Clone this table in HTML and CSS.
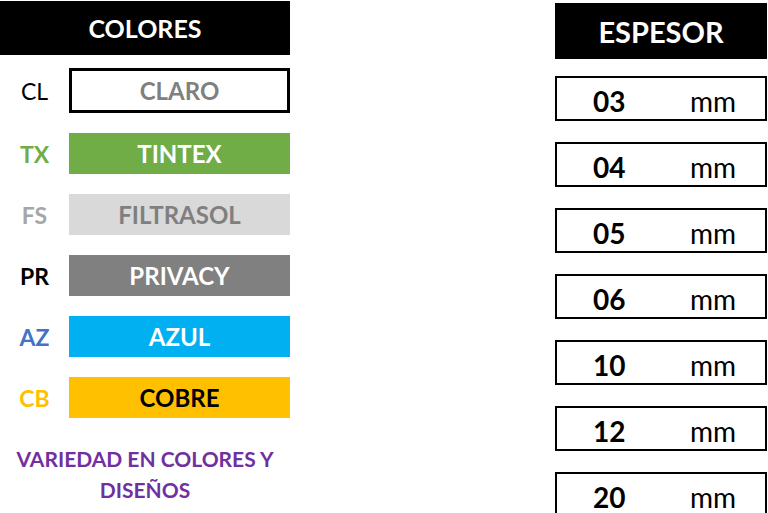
FILE: index.html
```html
<!DOCTYPE html>
<html lang="es">
<head>
<meta charset="utf-8">
<title>Colores y espesor</title>
<link rel="stylesheet" href="styles.css">
</head>
<body>
<main class="page">
  <section class="colors">
    <div class="header header-colors">COLORES</div>
    <div class="row row-first">
      <span class="code code-cl">CL</span>
      <span class="swatch sw-claro">CLARO</span>
    </div>
    <div class="row">
      <span class="code code-tx">TX</span>
      <span class="swatch sw-tintex">TINTEX</span>
    </div>
    <div class="row">
      <span class="code code-fs">FS</span>
      <span class="swatch sw-filtrasol">FILTRASOL</span>
    </div>
    <div class="row">
      <span class="code code-pr">PR</span>
      <span class="swatch sw-privacy">PRIVACY</span>
    </div>
    <div class="row">
      <span class="code code-az">AZ</span>
      <span class="swatch sw-azul">AZUL</span>
    </div>
    <div class="row">
      <span class="code code-cb">CB</span>
      <span class="swatch sw-cobre">COBRE</span>
    </div>
    <p class="note">VARIEDAD EN COLORES Y<br>DISEÑOS</p>
  </section>
  <section class="thickness">
    <div class="header header-thick">ESPESOR</div>
    <div class="thick thick-first"><span class="num">03</span><span class="unit">mm</span></div>
    <div class="thick"><span class="num">04</span><span class="unit">mm</span></div>
    <div class="thick"><span class="num">05</span><span class="unit">mm</span></div>
    <div class="thick"><span class="num">06</span><span class="unit">mm</span></div>
    <div class="thick"><span class="num">10</span><span class="unit">mm</span></div>
    <div class="thick"><span class="num">12</span><span class="unit">mm</span></div>
    <div class="thick"><span class="num">20</span><span class="unit">mm</span></div>
  </section>
</main>
</body>
</html>
```
FILE: styles.css
```css
html, body {
  margin: 0;
  padding: 0;
  background: #ffffff;
}
body {
  font-family: "Lato", "Open Sans", "Liberation Sans", sans-serif;
  width: 768px;
  height: 513px;
  overflow: hidden;
}
.page {
  display: flex;
  align-items: flex-start;
}
.colors {
  width: 290px;
  display: flex;
  flex-direction: column;
  padding-top: 1px;
}
.header {
  background: #000000;
  color: #ffffff;
  font-weight: 700;
  display: flex;
  align-items: center;
  justify-content: center;
}
.header-colors {
  height: 54px;
  font-size: 25px;
}
.row {
  display: flex;
  height: 41px;
  margin-top: 20px;
}
.row-first {
  margin-top: 13px;
  height: 45px;
}
.code {
  width: 69px;
  display: flex;
  align-items: center;
  justify-content: center;
  font-size: 23px;
  font-weight: 700;
}
.swatch {
  flex: 1;
  display: flex;
  align-items: center;
  justify-content: center;
  font-size: 24px;
  font-weight: 700;
  color: #ffffff;
  box-sizing: border-box;
}
.code-cl { color: #000000; font-weight: 400; }
.code-tx { color: #70ad47; }
.code-fs { color: #a6a6a6; }
.code-pr { color: #000000; }
.code-az { color: #4472c4; }
.code-cb { color: #ffc000; }
.sw-claro { border: 3px solid #000000; color: #808080; }
.sw-tintex { background: #70ad47; }
.sw-filtrasol { background: #d9d9d9; color: #7f7f7f; }
.sw-privacy { background: #808080; }
.sw-azul { background: #00b0f0; }
.sw-cobre { background: #ffc000; color: #000000; }
.note {
  margin: 25px 0 0;
  text-align: center;
  color: #7030a0;
  font-weight: 700;
  font-size: 21px;
  line-height: 31px;
}
.thickness {
  margin-left: 265px;
  width: 212px;
  display: flex;
  flex-direction: column;
  padding-top: 3px;
}
.header-thick {
  height: 56px;
  font-size: 29px;
}
.thick {
  height: 45px;
  margin-top: 21px;
  padding-top: 4px;
  border: 2px solid #000000;
  box-sizing: border-box;
  display: flex;
  align-items: center;
  font-size: 28px;
  color: #000000;
}
.thick-first { margin-top: 17px; }
.num {
  font-weight: 700;
  width: 97px;
  padding-left: 36px;
}
.unit {
  font-weight: 400;
}
```
